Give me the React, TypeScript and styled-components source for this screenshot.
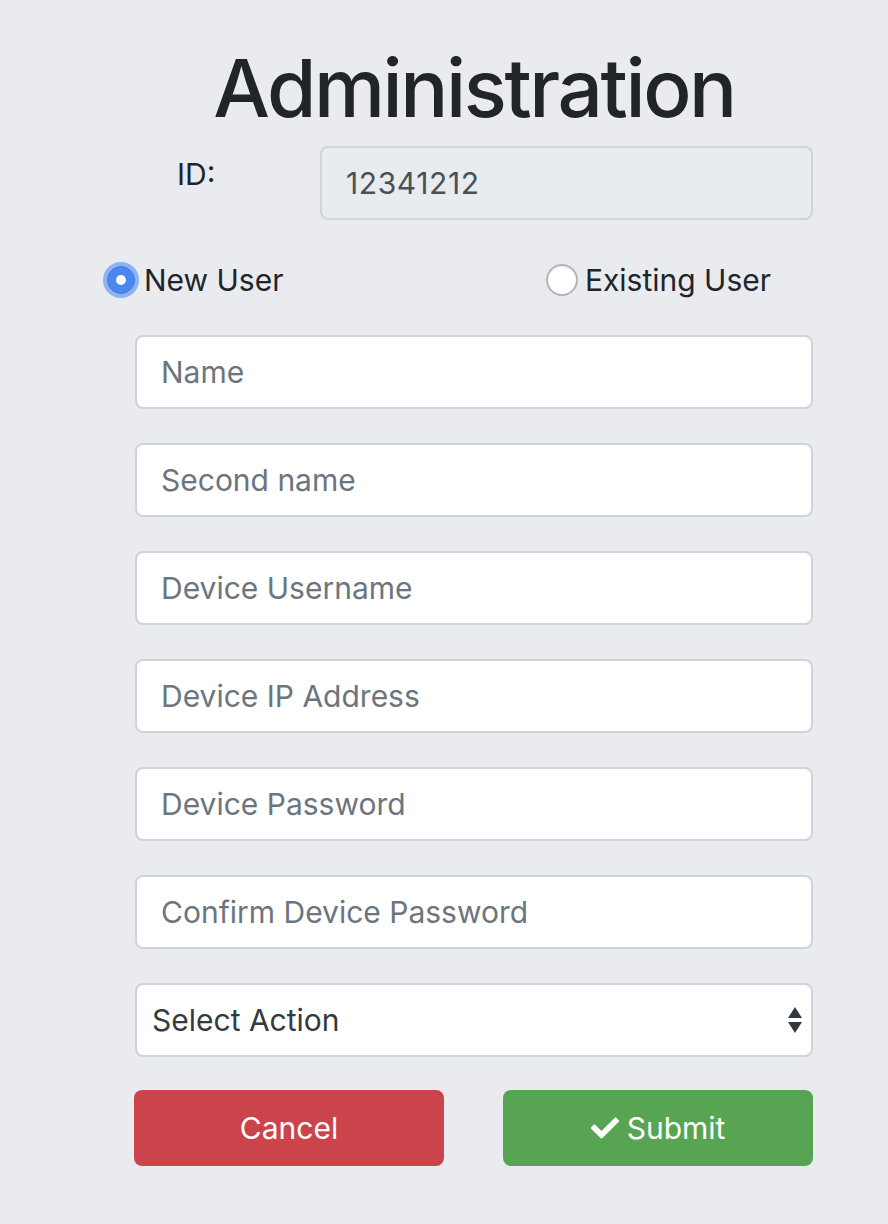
import React from "react";
import styled, { createGlobalStyle } from "styled-components";
import { FaCheck } from "react-icons/fa";

const Global = createGlobalStyle`
  html, body { margin: 0; padding: 0; background: #eaebef; }
  body { font-family: Inter, "Noto Sans", "Liberation Sans", sans-serif; color: #212529; }
  * { box-sizing: border-box; }
`;

const Page = styled.div`
  width: 888px;
  min-height: 1224px;
  background: #eaebef;
  padding: 48px 0 0 135px;
`;

const Column = styled.div`
  width: 678px;
  display: flex;
  flex-direction: column;
`;

const Title = styled.h1`
  margin: 0;
  font-size: 80px;
  line-height: 1;
  font-weight: 500;
  text-align: center;
  color: #212529;
  letter-spacing: -2.4px;
`;

const IdRow = styled.div`
  display: flex;
  align-items: flex-start;
  margin-top: 18px;
`;

const IdLabel = styled.label`
  width: 185px;
  padding: 10px 0 0 42px;
  font-size: 30px;
  line-height: 36px;
  color: #212529;
`;

const IdBox = styled.div`
  flex: 1;
  height: 74px;
  background: #e9ecef;
  border: 2px solid #ced4da;
  border-radius: 8px;
  padding: 0 24px;
  display: flex;
  align-items: center;
  font-size: 30px;
  letter-spacing: 0.6px;
  color: #495057;
`;

const RadioRow = styled.div`
  display: flex;
  justify-content: space-between;
  align-items: center;
  margin: 42px 42px 0 -31px;
  height: 36px;
`;

const RadioOption = styled.label`
  display: flex;
  align-items: center;
  gap: 7px;
  font-size: 30px;
  line-height: 36px;
  color: #212529;
`;

const RadioDot = styled.span<{ $checked?: boolean }>`
  width: ${(p) => (p.$checked ? "28px" : "32px")};
  height: ${(p) => (p.$checked ? "28px" : "32px")};
  margin: ${(p) => (p.$checked ? "2px 2px 2px 3px" : "0 0 0 -2px")};
  border-radius: 50%;
  display: inline-flex;
  align-items: center;
  justify-content: center;
  background: ${(p) => (p.$checked ? "#4a86ee" : "#fff")};
  border: ${(p) => (p.$checked ? "1px solid #3f7be3" : "2px solid #b5b5b5")};
  box-shadow: ${(p) => (p.$checked ? "0 0 0 4px rgba(110,160,245,0.75)" : "inset 0 1px 2px rgba(0,0,0,0.08)")};
  &::after {
    content: "";
    display: ${(p) => (p.$checked ? "block" : "none")};
    width: 10px;
    height: 10px;
    border-radius: 50%;
    background: #fff;
  }
`;

const Fields = styled.div`
  display: flex;
  flex-direction: column;
  gap: 34px;
  margin-top: 37px;
`;

const Field = styled.input`
  width: 100%;
  height: 74px;
  background: #fff;
  border: 2px solid #ced4da;
  border-radius: 8px;
  padding: 0 24px;
  font-family: inherit;
  font-size: 30px;
  color: #495057;
  outline: none;
  &::placeholder { color: #6c757d; opacity: 1; }
`;

const SelectBox = styled.div`
  position: relative;
  height: 74px;
  background: #fff;
  border: 2px solid #ced4da;
  border-radius: 8px;
  padding: 0 15px;
  display: flex;
  align-items: center;
  font-size: 30px;
  color: #343a40;
`;

const Arrows = styled.svg`
  position: absolute;
  right: 7px;
  top: 50%;
  transform: translateY(-50%);
`;

const Buttons = styled.div`
  display: flex;
  justify-content: space-between;
  margin-top: 33px;
  margin-left: -1px;
`;

const Button = styled.button<{ $variant: "danger" | "success" }>`
  width: 310px;
  height: 76px;
  border: none;
  border-radius: 8px;
  background: ${(p) => (p.$variant === "danger" ? "#cc444b" : "#57a553")};
  color: #fff;
  font-family: inherit;
  font-size: 30px;
  display: flex;
  align-items: center;
  justify-content: center;
  gap: 8px;
  cursor: pointer;
`;

const placeholders = [
  "Name",
  "Second name",
  "Device Username",
  "Device IP Address",
  "Device Password",
  "Confirm Device Password",
];

export default function App() {
  return (
    <Page>
      <Global />
      <Column>
        <Title>Administration</Title>
        <IdRow>
          <IdLabel>ID:</IdLabel>
          <IdBox>12341212</IdBox>
        </IdRow>
        <RadioRow>
          <RadioOption>
            <RadioDot $checked />
            New User
          </RadioOption>
          <RadioOption>
            <RadioDot />
            Existing User
          </RadioOption>
        </RadioRow>
        <Fields>
          {placeholders.map((p) => (
            <Field key={p} placeholder={p} />
          ))}
          <SelectBox>
            Select Action
            <Arrows width="18" height="30" viewBox="0 0 18 30">
              <path d="M9 2 L16 13 L2 13 Z" fill="#343a40" />
              <path d="M2 17 L16 17 L9 28 Z" fill="#343a40" />
            </Arrows>
          </SelectBox>
        </Fields>
        <Buttons>
          <Button $variant="danger">Cancel</Button>
          <Button $variant="success">
            <FaCheck size={28} />
            Submit
          </Button>
        </Buttons>
      </Column>
    </Page>
  );
}
